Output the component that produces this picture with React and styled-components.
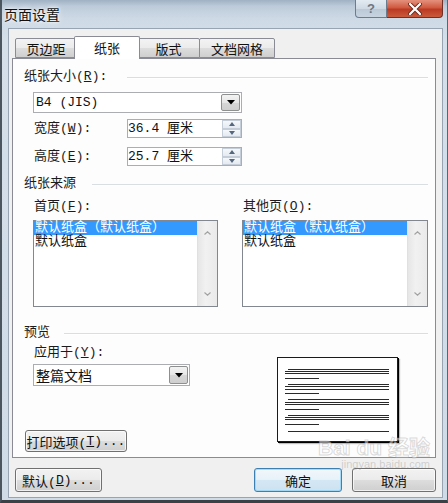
import React from "react";
import styled, { createGlobalStyle } from "styled-components";

const MONO = `"Liberation Mono", "Noto Sans CJK SC", monospace`;
const SANS = `"Noto Sans CJK SC", "Liberation Sans", sans-serif`;

const GlobalStyle = createGlobalStyle`
  html, body { margin: 0; padding: 0; background: #3b4047; }
  body { font-family: ${MONO}; }
`;

const Window = styled.div`
  position: relative;
  box-sizing: border-box;
  width: 448px;
  height: 503px;
  display: flex;
  flex-direction: column;
  border-left: 2px solid #4b5560;
  border-right: 1px solid #5a6572;
  border-bottom: 3px solid #3b4047;
  background: linear-gradient(
    180deg,
    #9fb1c4 0,
    #bccad9 6px,
    #cdd9e5 18px,
    #d4dfea 40px,
    #cfdbe7 100%
  );
`;

const TitleBar = styled.div`
  height: 28px;
  display: flex;
  align-items: flex-start;
  padding-left: 2px;
`;

const Title = styled.div`
  font-family: ${SANS};
  font-size: 14px;
  line-height: 28px;
  color: #111;
  text-shadow: 0 0 6px #fff, 0 0 3px #fff;
`;

const Captions = styled.div`
  display: flex;
  margin-left: auto;
  margin-right: 4px;
`;

const HelpButton = styled.div`
  box-sizing: border-box;
  width: 32px;
  height: 18px;
  border: 1px solid #6b7c8f;
  border-top: none;
  border-radius: 0 0 0 4px;
  background: linear-gradient(180deg, #e3eaf2 0%, #cfd9e4 50%, #bac8d6 51%, #c7d3df 100%);
  display: flex;
  align-items: center;
  justify-content: center;
  font-family: "Liberation Sans", sans-serif;
  font-weight: bold;
  font-size: 13px;
  color: #6d7783;
`;

const CloseButton = styled.div`
  box-sizing: border-box;
  width: 56px;
  height: 18px;
  border: 1px solid #6e3028;
  border-top: none;
  border-left: none;
  border-radius: 0 0 4px 0;
  background: linear-gradient(180deg, #e5917d 0%, #d05a40 45%, #bb3a22 55%, #c95a3c 100%);
  display: flex;
  align-items: center;
  justify-content: center;
`;

const Client = styled.div`
  flex: 1;
  margin: 0 4px 2px 6px;
  border: 1px solid #98a4b1;
  background: #f0f0f0;
  padding: 7px 6px 0 3px;
  display: flex;
  flex-direction: column;
`;

const TabRow = styled.div`
  display: flex;
  align-items: flex-end;
  height: 22px;
  margin-left: 3px;
`;

const Tab = styled.div`
  position: relative;
  box-sizing: border-box;
  width: ${(p) => p.$w}px;
  height: ${(p) => (p.$active ? 23 : 20)}px;
  margin: ${(p) => (p.$active ? "0 -2px -1px -3px" : p.$first ? "0" : "0 0 0 -1px")};
  z-index: ${(p) => (p.$active ? 1 : 0)};
  border: 1px solid #898c95;
  border-bottom: ${(p) => (p.$active ? "none" : "1px solid #898c95")};
  border-radius: 2px 2px 0 0;
  background: ${(p) =>
    p.$active ? "#ffffff" : "linear-gradient(180deg, #f3f3f3 0%, #ebebeb 50%, #dddddd 51%, #cfcfcf 100%)"};
  display: flex;
  justify-content: center;
  padding-top: ${(p) => (p.$active ? 2 : 1)}px;
  font-family: ${SANS};
  font-size: 13px;
  line-height: 17px;
  color: #111;
`;

const Panel = styled.div`
  box-sizing: border-box;
  height: 400px;
  border: 1px solid #898c95;
  background: #fdfdfd;
  padding: 10px 7px 5px 11px;
  display: flex;
  flex-direction: column;
`;

const GroupHeader = styled.div`
  display: flex;
  align-items: center;
  gap: ${(p) => p.$gap}px;
  height: 16px;
  margin-top: ${(p) => p.$top || 0}px;
  font-size: 13px;
  line-height: 16px;
  color: #1b1b1b;

  &::after {
    content: "";
    flex: 1;
    height: 1px;
    background: #d9dee3;
    box-shadow: 0 1px 0 #fff;
  }
`;

const Label = styled.div`
  font-size: 13px;
  line-height: 16px;
  height: 16px;
  color: #1b1b1b;
  margin-left: ${(p) => p.$left || 0}px;
  margin-top: ${(p) => p.$top || 0}px;
`;

const Combo = styled.div`
  box-sizing: border-box;
  width: ${(p) => p.$w}px;
  height: ${(p) => p.$h}px;
  margin-left: 9px;
  margin-top: ${(p) => p.$top}px;
  border: 1px solid #abadb3;
  background: #fff;
  padding: 1px;
  display: flex;
`;

const ComboText = styled.div`
  flex: 1;
  padding-left: 1px;
  font-family: ${(p) => (p.$sans ? SANS : MONO)};
  font-size: ${(p) => (p.$sans ? 14 : 13)}px;
  line-height: ${(p) => p.$lh}px;
  color: #111;
`;

const ComboButton = styled.div`
  box-sizing: border-box;
  width: 19px;
  border: 1px solid #8e8f8f;
  border-radius: 2px;
  background: linear-gradient(180deg, #f3f3f3 0%, #e6e6e6 50%, #d6d6d6 51%, #cfcfcf 100%);
  display: flex;
  align-items: center;
  justify-content: center;
`;

const FieldRow = styled.div`
  display: flex;
  align-items: center;
  margin-top: ${(p) => p.$top}px;
  margin-left: 10px;
`;

const FieldLabel = styled.div`
  width: 93px;
  font-size: 13px;
  line-height: 16px;
  color: #1b1b1b;
`;

const SpinBox = styled.div`
  box-sizing: border-box;
  width: 115px;
  height: 19px;
  border: 1px solid #abadb3;
  background: #fff;
  display: flex;
`;

const SpinText = styled.div`
  flex: 1;
  font-size: 13px;
  line-height: 17px;
  color: #111;
`;

const SpinButtons = styled.div`
  width: 19px;
  display: flex;
  flex-direction: column;
`;

const SpinHalf = styled.div`
  box-sizing: border-box;
  flex: 1;
  border: 1px solid #c5ced8;
  background: linear-gradient(180deg, #f5f8fb 0%, #e4eaf1 100%);
  display: flex;
  align-items: center;
  justify-content: center;
`;

const ListColumns = styled.div`
  display: flex;
  gap: 24px;
  margin-left: 9px;
`;

const ListColumn = styled.div`
  display: flex;
  flex-direction: column;
`;

const ListBox = styled.div`
  box-sizing: border-box;
  width: ${(p) => p.$w}px;
  height: 87px;
  margin-top: 5px;
  border: 1px solid #828790;
  background: #fff;
  display: flex;
`;

const ListItems = styled.div`
  flex: 1;
  display: flex;
  flex-direction: column;
`;

const ListItem = styled.div`
  height: 14px;
  line-height: 14px;
  padding-left: 1px;
  font-size: 13px;
  background: ${(p) => (p.$selected ? "#3399ff" : "transparent")};
  color: ${(p) => (p.$selected ? "#fff" : "#111")};
  white-space: nowrap;
`;

const ScrollBar = styled.div`
  box-sizing: border-box;
  width: 20px;
  padding: 10px 0;
  background: linear-gradient(90deg, #e6e6e6, #f1f1f1 40%, #eaeaea);
  border-left: 1px solid #e0e0e0;
  display: flex;
  flex-direction: column;
  justify-content: space-between;
  align-items: center;
`;

const BottomSection = styled.div`
  flex: 1;
  display: flex;
  margin-top: 4px;
`;

const BottomLeft = styled.div`
  width: 253px;
  display: flex;
  flex-direction: column;
`;

const PageWrap = styled.div`
  padding-top: 12px;
`;

const Page = styled.div`
  box-sizing: border-box;
  width: 121px;
  height: 85px;
  border: 1px solid #1a1a1a;
  background: #fff;
  box-shadow: 1px 1px 0 #000, 2px 2px 1px rgba(0, 0, 0, 0.25);
`;

const Button = styled.div`
  box-sizing: border-box;
  width: ${(p) => p.$w}px;
  height: ${(p) => p.$h}px;
  margin-left: ${(p) => p.$left || 0}px;
  margin-top: ${(p) => (p.$pushDown ? "auto" : "0")};
  border: 1px solid ${(p) => (p.$default ? "#3c7fb1" : "#707070")};
  border-radius: 3px;
  background: ${(p) =>
    p.$default
      ? "linear-gradient(180deg, #f2f8fc 0%, #e6f1f9 50%, #d4e7f4 51%, #cde2f1 100%)"
      : "linear-gradient(180deg, #f2f2f2 0%, #ebebeb 50%, #dddddd 51%, #cfcfcf 100%)"};
  box-shadow: inset 0 0 0 1px ${(p) => (p.$default ? "rgba(150,210,245,.8)" : "rgba(255,255,255,.7)")};
  display: flex;
  align-items: center;
  justify-content: center;
  font-family: ${(p) => (p.$sans ? SANS : MONO)};
  font-size: 13px;
  color: #111;
  white-space: nowrap;
`;

const Footer = styled.div`
  display: flex;
  align-items: flex-start;
  gap: 10px;
  margin-top: 10px;
  padding-left: 3px;
`;

const Spacer = styled.div`
  flex: 1;
`;

const Watermark = styled.div`
  position: absolute;
  left: 316px;
  top: 436px;
  display: flex;
  flex-direction: column;
  align-items: flex-end;
  white-space: nowrap;
  font-family: "Liberation Sans", "Noto Sans CJK SC", sans-serif;
  font-size: 21px;
  line-height: 24px;
  font-weight: bold;
  color: rgba(255, 255, 255, 0.5);
  -webkit-text-stroke: 1px rgba(150, 150, 150, 0.35);
  pointer-events: none;

  small {
    margin-top: -2px;
    font-size: 11px;
    line-height: 12px;
    font-weight: normal;
    -webkit-text-stroke: 0;
    color: rgba(140, 140, 140, 0.35);
  }
`;

const DownTriangle = () => (
  <svg width="8" height="5" viewBox="0 0 8 5">
    <polygon points="0,0 8,0 4,4.5" fill="#000" />
  </svg>
);

const SpinArrow = ({ up }) => (
  <svg width="6" height="4" viewBox="0 0 6 4">
    <polygon points={up ? "0,4 6,4 3,0" : "0,0 6,0 3,4"} fill="#55677f" />
  </svg>
);

const Chevron = ({ up }) => (
  <svg width="7" height="4" viewBox="0 0 7 4">
    <polyline
      points={up ? "0.5,3.5 3.5,0.8 6.5,3.5" : "0.5,0.5 3.5,3.2 6.5,0.5"}
      fill="none"
      stroke="#a2a2a2"
      strokeWidth="1.2"
    />
  </svg>
);

const CloseIcon = () => (
  <svg width="14" height="12" viewBox="0 0 14 12">
    <path d="M2 1 L12 11 M12 1 L2 11" stroke="#6b2a1f" strokeWidth="4" strokeLinecap="round" />
    <path d="M2 1 L12 11 M12 1 L2 11" stroke="#fff" strokeWidth="2.2" strokeLinecap="round" />
  </svg>
);

// three full lines and a short one per paragraph, then a last line
const PAGE_LINES = [
  [10, 111, 11], [7, 111, 13], [7, 111, 15], [7, 41, 20],
  [10, 111, 26], [7, 111, 28], [7, 111, 31], [7, 41, 35],
  [10, 111, 41], [7, 111, 44], [7, 111, 46], [7, 41, 51],
  [10, 111, 57], [7, 111, 59], [7, 111, 61], [7, 41, 66],
  [10, 111, 73],
];

const PageLines = () => (
  <svg width="119" height="83" viewBox="0 0 119 83">
    {PAGE_LINES.map(([x1, x2, y], i) => (
      <line key={i} x1={x1} x2={x2} y1={y + 0.5} y2={y + 0.5} stroke="#2a2a2a" strokeWidth="1" />
    ))}
  </svg>
);

const TABS = [
  { text: "页边距", w: 62 },
  { text: "纸张", w: 66, active: true },
  { text: "版式", w: 63 },
  { text: "文档网格", w: 76 },
];

const TRAYS = ["默认纸盒（默认纸盒）", "默认纸盒"];

function Spin({ value }) {
  return (
    <SpinBox>
      <SpinText>{value}</SpinText>
      <SpinButtons>
        <SpinHalf>
          <SpinArrow up />
        </SpinHalf>
        <SpinHalf>
          <SpinArrow />
        </SpinHalf>
      </SpinButtons>
    </SpinBox>
  );
}

function TrayList({ width }) {
  return (
    <ListBox $w={width}>
      <ListItems>
        {TRAYS.map((t, i) => (
          <ListItem key={t} $selected={i === 0}>
            {t}
          </ListItem>
        ))}
      </ListItems>
      <ScrollBar>
        <Chevron up />
        <Chevron />
      </ScrollBar>
    </ListBox>
  );
}

export default function App() {
  return (
    <>
      <GlobalStyle />
      <Window>
        <TitleBar>
          <Title>页面设置</Title>
          <Captions>
            <HelpButton>?</HelpButton>
            <CloseButton>
              <CloseIcon />
            </CloseButton>
          </Captions>
        </TitleBar>

        <Client>
          <TabRow>
            {TABS.map((t, i) => (
              <Tab key={t.text} $w={t.w} $active={t.active} $first={i === 0}>
                {t.text}
              </Tab>
            ))}
          </TabRow>

          <Panel>
            <GroupHeader $gap={20}>
              <span>
                纸张大小(<u>R</u>):
              </span>
            </GroupHeader>
            <Combo $w={209} $h={21} $top={7}>
              <ComboText $lh={17}>B4 (JIS)</ComboText>
              <ComboButton>
                <DownTriangle />
              </ComboButton>
            </Combo>
            <FieldRow $top={6}>
              <FieldLabel>
                宽度(<u>W</u>):
              </FieldLabel>
              <Spin value="36.4 厘米" />
            </FieldRow>
            <FieldRow $top={9}>
              <FieldLabel>
                高度(<u>E</u>):
              </FieldLabel>
              <Spin value="25.7 厘米" />
            </FieldRow>

            <GroupHeader $gap={16} $top={10}>
              <span>纸张来源</span>
            </GroupHeader>
            <ListColumns>
              <ListColumn>
                <Label $left={1} $top={7}>
                  首页(<u>F</u>):
                </Label>
                <TrayList width={185} />
              </ListColumn>
              <ListColumn>
                <Label $left={1} $top={7}>
                  其他页(<u>O</u>):
                </Label>
                <TrayList width={186} />
              </ListColumn>
            </ListColumns>

            <GroupHeader $gap={14} $top={18}>
              <span>预览</span>
            </GroupHeader>
            <BottomSection>
              <BottomLeft>
                <Label $left={10}>
                  应用于(<u>Y</u>):
                </Label>
                <Combo $w={157} $h={22} $top={3}>
                  <ComboText $sans $lh={18}>
                    整篇文档
                  </ComboText>
                  <ComboButton>
                    <DownTriangle />
                  </ComboButton>
                </Combo>
                <Button $w={102} $h={22} $left={1} $pushDown>
                  打印选项(<u>T</u>)...
                </Button>
              </BottomLeft>
              <PageWrap>
                <Page>
                  <PageLines />
                </Page>
              </PageWrap>
            </BottomSection>
          </Panel>

          <Footer>
            <Button $w={87} $h={24}>
              默认(<u>D</u>)...
            </Button>
            <Spacer />
            <Button $w={88} $h={24} $default $sans>
              确定
            </Button>
            <Button $w={84} $h={24} $sans>
              取消
            </Button>
          </Footer>
        </Client>

        <Watermark>
          <span>Bai du 经验</span>
          <small>jingyan.baidu.com</small>
        </Watermark>
      </Window>
    </>
  );
}
